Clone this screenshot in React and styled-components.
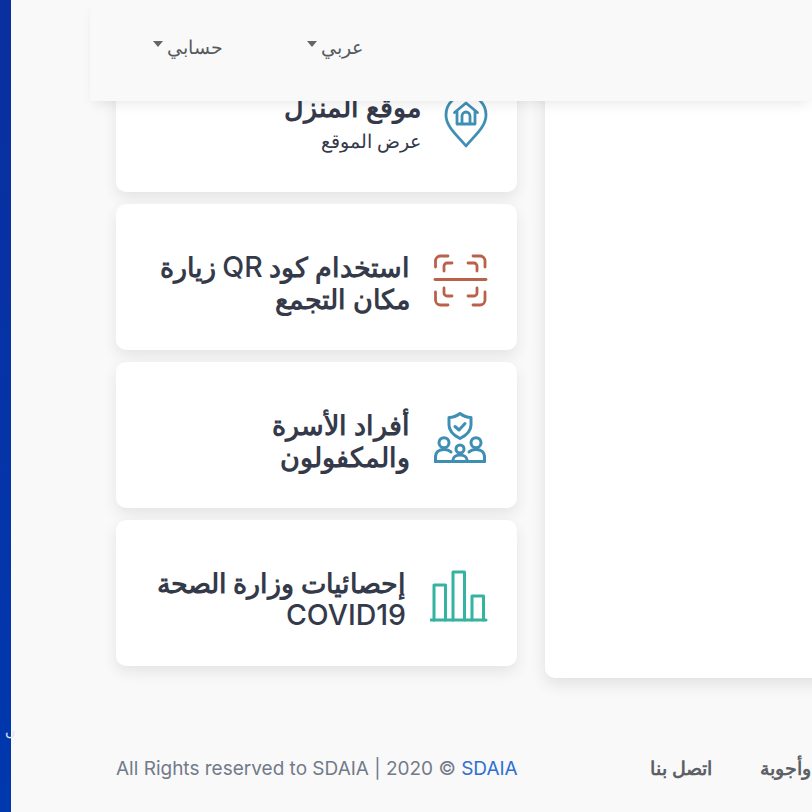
import styled, { createGlobalStyle } from 'styled-components';

const GlobalStyle = createGlobalStyle`
  html, body {
    margin: 0;
    height: 812px;
    overflow: hidden;
    background: #f9f9f9;
  }
  body {
    font-family: Inter, "Noto Sans", sans-serif;
  }
`

const Page = styled.div`
  position: relative;
  width: 812px;
  height: 812px;
  overflow: hidden;
  display: flex;
`
const Stripe = styled.div`
  width: 11px;
  flex: none;
  background: linear-gradient(180deg, #0a2f9e 0%, #0038ae 100%);
  padding-top: 722px;
  box-sizing: border-box;
  overflow: visible;
`
const StripeText = styled.span`
  display: block;
  margin-left: 5px;
  font-size: 14px;
  line-height: 18px;
  color: #e8e8e8;
`
const Main = styled.main`
  flex: none;
  width: 1000px;
  padding: 46px 0 0 105px;
  box-sizing: border-box;
`
const Header = styled.header`
  position: absolute;
  top: 0;
  left: 90px;
  right: 0;
  height: 101px;
  background: #f9f9f9;
  box-shadow: 0 6px 12px -4px rgba(0, 0, 0, 0.1);
  display: flex;
  align-items: center;
  gap: 84px;
  padding: 0 0 7px 63px;
  box-sizing: border-box;
  z-index: 2;
`
const Menu = styled.div`
  display: flex;
  align-items: center;
  gap: 4px;
  color: #555a60;
  font-size: 18.5px;
`
const Caret = styled.span`
  width: 0;
  height: 0;
  margin-top: -6px;
  border-top: 6px solid #666;
  border-left: 5.5px solid transparent;
  border-right: 5.5px solid transparent;
`
const Content = styled.div`
  display: flex;
  gap: 28px;
  align-items: flex-start;
`
const Cards = styled.div`
  width: 401px;
  flex: none;
  display: flex;
  flex-direction: column;
  gap: 12px;
`
const Card = styled.div`
  direction: rtl;
  height: 146px;
  display: flex;
  align-items: center;
  gap: ${props => props.$gap}px;
  padding-right: 27px;
  box-sizing: border-box;
  background: #fff;
  border-radius: 10px;
  box-shadow: 0 6px 14px rgba(50, 50, 60, 0.1);
`
const Icon = styled.svg`
  width: 60px;
  height: 60px;
  flex: none;
  fill: none;
  stroke: ${props => props.$color};
  stroke-width: ${props => props.$weight || 2.8};
  stroke-linecap: round;
  stroke-linejoin: round;
`
const CardText = styled.div`
  color: #343a4a;
  padding-top: ${props => props.$drop}px;
`
const CardTitle = styled.div`
  font-size: 26.5px;
  font-weight: 600;
  line-height: 32px;
`
const LatinWord = styled.span`
  font-size: 28.5px;
  font-weight: 500;
`
const CardSub = styled.div`
  font-size: 19px;
  line-height: 22px;
  margin-top: 8px;
`
const Panel = styled.div`
  flex: none;
  width: 500px;
  height: 632px;
  background: #fff;
  border-radius: 10px 0 0 10px;
  box-shadow: 0 6px 16px rgba(50, 50, 60, 0.12);
`
const Footer = styled.footer`
  display: flex;
  align-items: center;
  height: 20px;
  margin-top: 80px;
`
const Copyright = styled.div`
  width: 534px;
  flex: none;
  font-size: 19px;
  color: #737a8a;
  white-space: nowrap;
`
const BrandLink = styled.a`
  color: #2f6fd0;
`
const FooterLink = styled.a`
  direction: rtl;
  flex: none;
  font-size: 19px;
  font-weight: 600;
  color: #5d6166;
  margin-right: 48px;
  white-space: nowrap;
`

const App = () => {
    return (
        <Page>
            <GlobalStyle />
            <Stripe><StripeText>ں</StripeText></Stripe>
            <Header>
                <Menu><Caret /><span>حسابي</span></Menu>
                <Menu><Caret /><span>عربي</span></Menu>
            </Header>
            <Main>
                <Content>
                    <Cards>
                        <Card $gap={9}>
                            <Icon viewBox="10 10 60 60" $color="#3f8fb5">
                                <path d="M46 67 C38 57 26 48 26 36 A20 20 0 0 1 66 36 C66 48 54 57 46 67Z" />
                                <path d="M34.5 33.5 L46 24 L57.5 33.5 M37 32 V45 H55 V32 M42 45 V37 A4 4 0 0 1 50 37 V45" />
                            </Icon>
                            <CardText $drop={5}>
                                <CardTitle>موقع المنزل</CardTitle>
                                <CardSub>عرض الموقع</CardSub>
                            </CardText>
                        </Card>
                        <Card $gap={20}>
                            <Icon viewBox="10 7 60 60" $color="#b9614a">
                                <path d="M15.5 27 V21 a5 5 0 0 1 5-5 H28 M53 16 H60 a5 5 0 0 1 5 5 V27" />
                                <path d="M24 31 V26 a3 3 0 0 1 3-3 H32 M48 23 H54 a3 3 0 0 1 3 3 V31" />
                                <path d="M15 39.5 H66" />
                                <path d="M15.5 52 V60 a5 5 0 0 0 5 5 H28 M53 65 H60 a5 5 0 0 0 5-5 V52" />
                                <path d="M24 48 V53 a3 3 0 0 0 3 3 H32 M48 56 H54 a3 3 0 0 0 3-3 V48" />
                            </Icon>
                            <CardText $drop={12}>
                                <CardTitle>استخدام كود <LatinWord>QR</LatinWord> زيارة<br />مكان التجمع</CardTitle>
                            </CardText>
                        </Card>
                        <Card $gap={20}>
                            <Icon viewBox="10 5 60 60" $color="#3f8fb5" $weight={3}>
                                <path d="M40 13.5 C36 16.5 33 17.5 29 17.5 V25 C29 31 33 35 40 38.5 C47 35 51 31 51 25 V17.5 C47 17.5 44 16.5 40 13.5Z" />
                                <path d="M35 26.5 L39 30 L45 23.5" />
                                <circle cx="24" cy="42.7" r="5" />
                                <circle cx="40" cy="49" r="4" />
                                <circle cx="56" cy="42.7" r="5" />
                                <path d="M15.5 61.5 V57 C15.5 52 19 49.5 24 49.5 C27 49.5 29.5 50.5 31 52" />
                                <path d="M64.5 61.5 V57 C64.5 52 61 49.5 56 49.5 C53 49.5 50.5 50.5 49 52" />
                                <path d="M33 61.5 V60 C33 57 36 55 40 55 C44 55 47 57 47 60 V61.5" />
                                <path d="M15.5 61.5 H64.5" />
                            </Icon>
                            <CardText $drop={12}>
                                <CardTitle>أفراد الأسرة<br />والمكفولون</CardTitle>
                            </CardText>
                        </Card>
                        <Card $gap={24}>
                            <Icon viewBox="10 3 60 60" $color="#34b3a0" $weight={3}>
                                <path d="M14 60 V25 H25.5 V60 M33 60 V12 H44.5 V60 M52 60 V36 H63.5 V60" />
                                <path d="M11 60 H66" />
                            </Icon>
                            <CardText $drop={12}>
                                <CardTitle>إحصائيات وزارة الصحة<br /><LatinWord>COVID19</LatinWord></CardTitle>
                            </CardText>
                        </Card>
                    </Cards>
                    <Panel />
                </Content>
                <Footer>
                    <Copyright>All Rights reserved to SDAIA | 2020 © <BrandLink>SDAIA</BrandLink></Copyright>
                    <FooterLink>اتصل بنا</FooterLink>
                    <FooterLink>أسئلة وأجوبة</FooterLink>
                </Footer>
            </Main>
        </Page>
    );
}
export default App
